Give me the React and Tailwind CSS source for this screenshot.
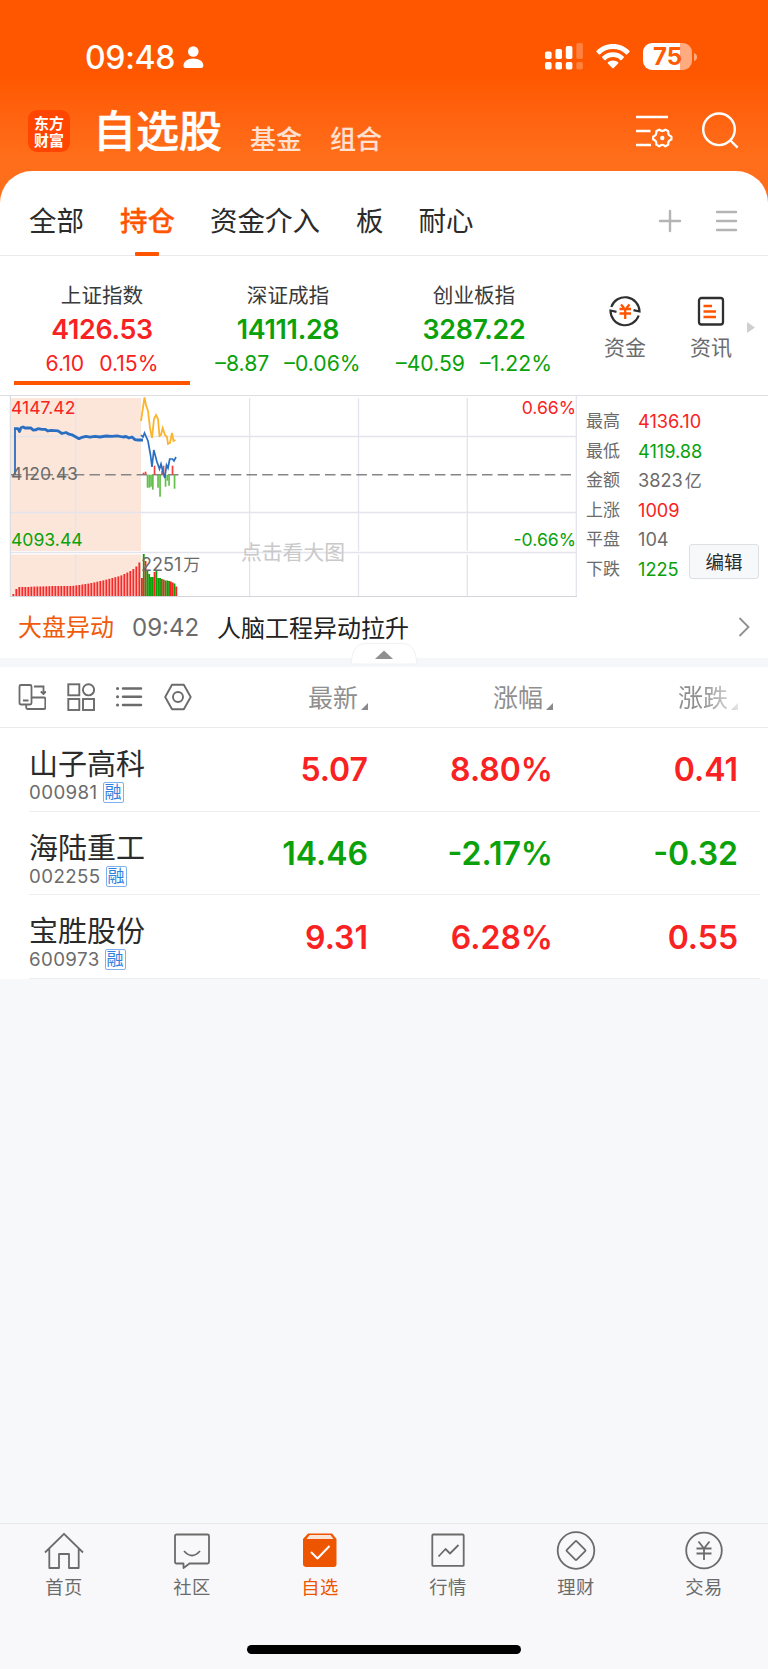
const indices = [
  { name: "上证指数", value: "4126.53", diff: "6.10", pct: "0.15%", up: true, active: true },
  { name: "深证成指", value: "14111.28", diff: "–8.87", pct: "–0.06%", up: false },
  { name: "创业板指", value: "3287.22", diff: "–40.59", pct: "–1.22%", up: false },
];

const stats = [
  { label: "最高", value: "4136.10", color: "text-[#f82222]" },
  { label: "最低", value: "4119.88", color: "text-[#0aa10a]" },
  { label: "金额", value: "3823", unit: "亿", color: "text-[#6b6b6b]" },
  { label: "上涨", value: "1009", color: "text-[#f82222]" },
  { label: "平盘", value: "104", color: "text-[#6b6b6b]" },
  { label: "下跌", value: "1225", color: "text-[#0aa10a]" },
];

const stocks = [
  { name: "山子高科", code: "000981", price: "5.07", pct: "8.80%", diff: "0.41", up: true },
  { name: "海陆重工", code: "002255", price: "14.46", pct: "-2.17%", diff: "-0.32", up: false },
  { name: "宝胜股份", code: "600973", price: "9.31", pct: "6.28%", diff: "0.55", up: true },
];

// height of the pre-open volume bars, left to right
const preVolume = [
  2, 7, 9, 9, 9, 9, 9.3, 9.4, 9.5, 9.5, 9.6, 9.7, 9.8, 10, 10, 10, 10, 10, 10, 10, 10.2, 10.6,
  11, 11.5, 12, 12.4, 13, 13.6, 14.3, 15, 15.6, 16.4, 17.2, 18, 18.8, 19.6, 20.6, 22, 23.5, 25, 27, 29.5, 33.5,
];

const liveVolume = [
  [18, "r"], [42, "g"], [35, "r"], [26, "g"], [22, "g"], [19, "g"], [19, "g"], [24, "r"], [26, "g"],
  [18, "g"], [18, "g"], [17, "r"], [16.5, "g"], [15.5, "r"], [15.5, "g"], [15, "g"], [14.5, "r"],
  [13.5, "r"], [12.5, "g"], [9.5, "r"],
];

// bars around the dashed middle line: [x, height], positive goes up
const flow = [
  [143.5, 2], [145.5, 3], [147.5, -13], [149.2, -13], [151, -12], [152.8, -15], [154.5, 9],
  [158, -13], [160, -22], [162, 4], [163.5, 9], [165.5, -12], [167.3, -6], [169, -11], [172.5, 9], [174.5, -14],
];

function StatusBar() {
  return (
    <div className="flex h-[94px] items-end justify-between pl-[85px] pr-[71px] pb-[24px] text-white">
      <div className="flex h-[26px] items-center">
        <span className="pt-px text-[32px] font-medium tracking-[-0.3px]">09:48</span>
        <svg className="ml-2 h-[22px] w-[21px]" viewBox="0 0 21 22" fill="currentColor">
          <circle cx="10.3" cy="5.5" r="5.3" />
          <path d="M0.5 19.5C0.5 15.5 4.5 12.6 10.3 12.6S20.3 15.5 20.3 19.5C20.3 21.2 19.5 22 18 22H2.8C1.3 22 0.5 21.2 0.5 19.5Z" />
        </svg>
      </div>
      <div className="flex h-[27px] items-center">
        <svg className="h-[27px] w-[39px]" viewBox="0 0 39 27" fill="currentColor">
          <rect x="0" y="8.5" width="6.6" height="7.5" rx="1.8" />
          <rect x="10.4" y="6" width="6.6" height="10" rx="1.8" />
          <rect x="20.8" y="3" width="6.6" height="13" rx="1.8" />
          <rect x="31.3" y="0" width="6.6" height="16" rx="1.8" opacity=".25" />
          <rect x="0" y="19" width="6.6" height="7.5" rx="1.8" />
          <rect x="10.4" y="19" width="6.6" height="7.5" rx="1.8" />
          <rect x="20.8" y="19" width="6.6" height="7.5" rx="1.8" />
          <rect x="31.3" y="19" width="6.6" height="7.5" rx="1.8" opacity=".25" />
        </svg>
        <svg className="ml-3 h-[25px] w-[34px]" viewBox="0 0 34 25" fill="currentColor">
          <path d="M17 0C10.5 0 4.8 2.5 0.6 6.7Q0 7.4 0.6 8.1L2.7 10.2Q3.4 10.8 4.1 10.2C7.5 6.9 12 5 17 5S26.5 6.9 29.9 10.2Q30.6 10.8 31.3 10.2L33.4 8.1Q34 7.4 33.4 6.7C29.2 2.5 23.5 0 17 0Z" />
          <path d="M17 8.2C12.8 8.2 9.1 9.8 6.3 12.4Q5.7 13.1 6.3 13.8L8.4 15.9Q9.1 16.5 9.8 15.9C11.7 14.1 14.2 13.1 17 13.1S22.3 14.1 24.2 15.9Q24.9 16.5 25.6 15.9L27.7 13.8Q28.3 13.1 27.7 12.4C24.9 9.8 21.2 8.2 17 8.2Z" />
          <path d="M17 16.5C15 16.5 13.2 17.2 11.9 18.3Q11.3 19 11.9 19.6L16.3 24Q17 24.7 17.7 24L22.1 19.6Q22.7 19 22.1 18.3C20.8 17.2 19 16.5 17 16.5Z" />
        </svg>
        <div className="ml-[13px] flex h-[27px] w-[49px] items-center justify-center rounded-[9px] bg-gradient-to-r from-white from-76% to-white/50 to-76%">
          <span className="text-[24px] leading-none font-bold text-[#ff5a04]">75</span>
        </div>
        <svg className="ml-[2px] h-2 w-[3px]" viewBox="0 0 3 8" fill="white" opacity=".5">
          <path d="M0 0Q3 1 3 4T0 8Z" />
        </svg>
      </div>
    </div>
  );
}

function Header() {
  return (
    <div className="flex h-[77px] items-start px-7 text-white">
      <div className="mt-4 flex size-[42px] shrink-0 flex-col items-center justify-center rounded-[9px] bg-[#ff4500] font-['Noto_Sans_CJK_SC',sans-serif] text-[15px] leading-[17px] font-bold">
        <span>东方</span>
        <span>财富</span>
      </div>
      <h1 className="ml-[23px] text-[43px] leading-[75px] font-medium whitespace-nowrap [-webkit-text-stroke:0.5px_white]">
        自选股
      </h1>
      <span className="ml-[28px] text-[26px] leading-[92px] font-medium whitespace-nowrap text-white/80">基金</span>
      <span className="ml-[28px] text-[26px] leading-[92px] font-medium whitespace-nowrap text-white/80">组合</span>
      <svg className="mt-[20px] ml-auto h-[36px] w-[38px]" viewBox="0 0 38 36" fill="none" stroke="currentColor" strokeWidth="2.4">
        <path d="M1 3H33M1 17H15.5M1 31H16" />
        <path
          strokeWidth="2.2"
          strokeLinejoin="round"
          d="M24.2 15.6Q27.3 18.2 30.4 15.6L33.3 17.2Q32.6 21.3 36.4 22.5V25.5Q32.6 26.7 33.3 30.6L30.4 32.3Q27.3 29.6 24.2 32.3L21.3 30.6Q22 26.7 18.2 25.5V22.5Q22 21.3 21.3 17.2Z"
        />
        <circle cx="27.3" cy="24" r="2.2" fill="currentColor" stroke="none" />
      </svg>
      <svg className="mt-[18px] mr-[1px] ml-[28px] h-[38px] w-[38px]" viewBox="0 0 38 38" fill="none" stroke="currentColor" strokeWidth="2.4">
        <circle cx="18" cy="17.3" r="15.8" />
        <path d="M29 28L36.6 35.6" />
      </svg>
    </div>
  );
}

function GroupTabs() {
  return (
    <div className="flex h-[85px] border-b border-[#e9eaec] pr-[30px] pl-[29px] text-[27.5px] leading-[101px] text-[#2b2b2b]">
      <span>全部</span>
      <div className="relative ml-[36px] font-medium text-[#ff5500] [-webkit-text-stroke:0.3px_#ff5500]">
        持仓
        <div className="absolute bottom-[-1px] left-[15px] h-1 w-6 rounded-[1px] bg-[#ff5500]" />
      </div>
      <span className="ml-[35px]">资金介入</span>
      <span className="ml-[36px]">板</span>
      <span className="ml-[35px]">耐心</span>
      <svg className="mt-[38px] ml-auto size-6" viewBox="0 0 24 24" stroke="#b4b4b4" strokeWidth="2.4" strokeLinecap="round">
        <path d="M12 2V22M2 12H22" />
      </svg>
      <svg className="mt-[38px] ml-[32px] size-6" viewBox="0 0 24 24" stroke="#b4b4b4" strokeWidth="2.4" strokeLinecap="round">
        <path d="M3 3H22M3 12H22M3 21H22" />
      </svg>
    </div>
  );
}

function IndexCards() {
  return (
    <div className="flex h-[139px] pl-[9px]">
      {indices.map((it) => (
        <div
          key={it.name}
          className={`flex w-[186px] flex-col items-center whitespace-nowrap ${it.up ? "text-[#f82222]" : "text-[#0aa10a]"}`}
        >
          <div className="mt-[25px] h-[30px] text-[20.6px] leading-[30px] text-[#3a3a3a]">{it.name}</div>
          <div className="mt-[3px] h-[30px] text-[26.8px] leading-[30px] font-semibold tracking-[-0.3px]">{it.value}</div>
          <div className="mt-[6px] flex h-[26px] gap-[15px] text-[21.2px] leading-[26px]">
            <span>{it.diff}</span>
            <span>{it.pct}</span>
          </div>
          {it.active && <div className="mt-[5px] h-1 w-[176px] bg-[#ff5500]" />}
        </div>
      ))}
      <div className="ml-[15px] flex w-[86px] flex-col items-center text-[21px] leading-[30px] text-[#6b6b6b]">
        <svg className="mt-[39px] size-8" viewBox="0 0 32 32" fill="none" stroke="#2f2f2f" strokeWidth="2.2">
          <path d="M2.3 12A14.5 14.5 0 0 1 30.5 16.5L24.5 15.2" />
          <path d="M29.7 20.5A14.5 14.5 0 0 1 1.5 15.5L7.5 16.8" />
          <path stroke="#ff5500" strokeWidth="2.3" d="M12 9.5L15 13M20.5 9.5L17.5 13M10.5 14H22M10.5 18.5H22M16.2 13V24" />
        </svg>
        <span className="mt-[6px]">资金</span>
      </div>
      <div className="flex w-[86px] flex-col items-center text-[21px] leading-[30px] text-[#6b6b6b]">
        <svg className="mt-[39px] size-8" viewBox="0 0 32 32" fill="none" stroke="#2f2f2f" strokeWidth="2.3">
          <rect x="4" y="3" width="24" height="26.5" rx="2.5" />
          <path stroke="#ff5500" d="M8.5 11H17M8.5 16.5H21M8.5 22H21" />
        </svg>
        <span className="mt-[6px]">资讯</span>
      </div>
      <svg className="mt-[66px] ml-[-7px] h-[11px] w-2 shrink-0" viewBox="0 0 8 11" fill="#cfcfcf">
        <path d="M0 0L8 5.5L0 11Z" />
      </svg>
    </div>
  );
}

function Chart() {
  return (
    <div className="relative ml-[9px] h-[202px] w-[569px] text-[17.6px] leading-none">
      <svg className="block h-[202px] w-[569px]" viewBox="9 10 569 202" fill="none">
        <rect x="11" y="13" width="130" height="153" fill="#fce6da" />
        <rect x="11" y="169.5" width="130" height="41" fill="#fce6da" />
        <g stroke="#e3e4ec" strokeWidth="1.3">
          <path d="M75.7 13V166M75.7 169.5V211M249.6 13V166M249.6 169.5V211M358.5 13V166M358.5 169.5V211M467.3 13V166M467.3 169.5V211" />
          <path d="M10 51.5H576M10 127.5H576M10 167.5H576" />
          <path d="M576.3 10V211" />
        </g>
        <path d="M10.3 10V211.5" stroke="#d3d5da" />
        <path d="M10 211.5H577" stroke="#d3d5da" />
        <path d="M11 89.7H572" stroke="#858585" strokeWidth="1.4" strokeDasharray="10.5 5.2" />

        {preVolume.map((h, i) => (
          <rect key={i} x={12.4 + i * 3} y={211 - h} width="1.9" height={h} fill="#f62a2a" />
        ))}
        {liveVolume.map(([h, c], i) => (
          <rect key={i} x={141 + i * 1.81} y={211 - h} width="1.85" height={h} fill={c === "r" ? "#f82222" : "#0aa10a"} />
        ))}
        {flow.map(([x, h]) => (
          <rect
            key={x}
            x={x - 0.8}
            y={h > 0 ? 89.7 - h : 89.7}
            width="1.7"
            height={Math.abs(h)}
            fill={h > 0 ? "#f04040" : "#62bf4a"}
          />
        ))}

        <polyline stroke="#2a6ec2" strokeWidth="1.8" points="15,90 15,43.5" />
        <polyline
          stroke="#2a6ec2"
          strokeWidth="2.8"
          strokeLinejoin="round"
          points="14,43.7 18,43.7 19.5,46.5 21,42.7 23,42 25,43 31,43 33,45 36,44.8 38,43.6 42,44.3 45,44.3 48,46 50,45.5 55,45.6 58,45.8 62,48.5 66,47.5 69,49.2 72,49.8 75,51.5 79,53.7 82,52.3 86,51.3 90,52.2 95,51.3 100,52 106,51 112,51.3 117,50.8 123,52 126,51.5 129,53 132,52 135,54.6 138,55 143,55"
        />
        <polyline
          stroke="#2a6ec2"
          strokeWidth="1.7"
          points="141,50 143,52 144.5,48 148,56 150.5,70 152,82 153.8,65 157,77 159.5,84 161,79 163,87 164.8,93 166.5,80 168,83 169.7,74 172.5,74 174,76 176,72"
        />
        <polyline
          stroke="#fbb42c"
          strokeWidth="1.8"
          points="141,36 144.5,12.5 146,20 148,26 150,43 152,53 154,34 156,30 158,34 159.5,51 161,50 162.7,43 165,50 167,52 168,59 170,58 172,48 173.5,56 175.5,55"
        />
      </svg>
      <div className="absolute top-[4px] left-[2px] text-[#f82222]">4147.42</div>
      <div className="absolute top-[70px] left-[2px] text-[#6b6b6b]">4120.43</div>
      <div className="absolute top-[136px] left-[2px] text-[#0aa10a]">4093.44</div>
      <div className="absolute top-[4px] right-[2px] text-[#f82222]">0.66%</div>
      <div className="absolute top-[136px] right-[2px] text-[#0aa10a]">-0.66%</div>
      <div className="absolute top-[161px] left-[132px] text-[18px] text-[#6b6b6b]">
        2251<span className="ml-[2px] text-[17px]">万</span>
      </div>
      <div className="absolute top-[148px] left-[232px] text-[20.8px] text-[#c9c9c9]">点击看大图</div>
    </div>
  );
}

function ChartPanel() {
  return (
    <div className="flex h-[202px] border-t-[1.5px] border-[#dcdee2]">
      <div className="mt-[-1px]">
        <Chart />
      </div>
      <div className="relative flex-1 pt-[11px] pl-2 text-[17px] leading-[29.6px] whitespace-nowrap">
        {stats.map((s) => (
          <div key={s.label} className="flex h-[29.6px]">
            <span className="w-[52px] text-[#6b6b6b]">{s.label}</span>
            <span className={`text-[18.2px] ${s.color}`}>
              {s.value}
              {s.unit && <span className="ml-[2px] text-[17px]">{s.unit}</span>}
            </span>
          </div>
        ))}
        <button className="absolute top-[148px] right-[9px] h-[35px] w-[70px] rounded-[3px] border border-[#dddfe4] bg-[#f7f8fa] text-[18.5px] leading-[34px] text-[#2b2b2b]">
          编辑
        </button>
      </div>
    </div>
  );
}

function NewsRow() {
  return (
    <div className="relative flex h-[70px] items-start border-b-[9px] border-[#f6f7fa] pr-[18px] pl-[18px] text-[24px] leading-[62px] whitespace-nowrap">
      <span className="text-[#f05a0a]">大盘异动</span>
      <span className="ml-[18px] text-[#6b6b6b]">09:42</span>
      <span className="ml-[18px] pt-px text-[#222]">人脑工程异动拉升</span>
      <svg className="mt-[20px] ml-auto h-5 w-3" viewBox="0 0 12 20" fill="none" stroke="#8f8f8f" strokeWidth="1.8">
        <path d="M1.5 1L10.5 10L1.5 19" />
      </svg>
      {/* collapse handle */}
      <svg className="absolute top-[45px] left-[350px] h-[24px] w-[68px]" viewBox="0 0 68 24">
        <path d="M1 22C2 14 3 1.5 16 1.5H52C65 1.5 66 14 67 22Z" fill="#fff" stroke="#f0f1f4" />
        <path d="M25 17L34 8.5L43 17Z" fill="#8f8f8f" />
      </svg>
    </div>
  );
}

function ColumnTitle({ children }) {
  return (
    <>
      <span className="pt-[4px]">{children}</span>
      <svg className="mb-[-19px] ml-[3px] h-[7px] w-[7px]" viewBox="0 0 7 7" fill="#8a8a8a">
        <path d="M7 0V7H0Z" />
      </svg>
    </>
  );
}

function ListToolbar() {
  return (
    <div className="flex h-[61px] items-center border-b border-[#e9eaec] text-[25px] whitespace-nowrap text-[#8f8f8f]">
      <div className="flex w-[190px] shrink-0 items-center gap-[20.5px] pl-[18px] [&>svg]:shrink-0">
        <svg className="size-7" viewBox="0 0 28 28" fill="none" stroke="#6b6b6b" strokeWidth="1.8">
          <rect x="1.5" y="2" width="12" height="19.5" rx="1.5" />
          <path d="M5 17.5H10.5M16 3.5H25.5V10M22.8 8.5L25.5 11L28 8.5M14 14.5H26Q27.3 14.5 27.3 16V24.5Q27.3 26 26 26H9.5Q8.2 26 8.2 24.5V22" />
        </svg>
        <svg className="size-7" viewBox="0 0 28 28" fill="none" stroke="#6b6b6b" strokeWidth="1.9">
          <rect x="1.3" y="1.3" width="11" height="11" />
          <rect x="1.3" y="16" width="11" height="11" />
          <rect x="16" y="16" width="11" height="11" />
          <circle cx="21.5" cy="6.8" r="5.6" />
        </svg>
        <svg className="size-7" viewBox="0 0 28 28" fill="none" stroke="#6b6b6b" strokeWidth="2.5" strokeLinecap="round">
          <path d="M8 5.5H26M8 13.8H26M8 22H26" />
          <path strokeWidth="3" d="M2.5 5.5H2.6M2.5 13.8H2.6M2.5 22H2.6" />
        </svg>
        <svg className="size-7" viewBox="0 0 28 28" fill="none" stroke="#6b6b6b" strokeWidth="1.9" strokeLinejoin="round">
          <path d="M8 1.8H19.8L26.7 14L19.8 26.2H8L1.2 14Z" />
          <circle cx="14" cy="14" r="5" />
        </svg>
      </div>
      <div className="flex w-[178px] items-center justify-end">
        <ColumnTitle>最新</ColumnTitle>
      </div>
      <div className="flex w-[185px] items-center justify-end">
        <ColumnTitle>涨幅</ColumnTitle>
      </div>
      <div className="flex w-[185px] items-center justify-end [mask-image:linear-gradient(to_right,black_80%,transparent_106%)]">
        <ColumnTitle>涨跌</ColumnTitle>
      </div>
    </div>
  );
}

function StockRow({ stock }) {
  return (
    <div className="mr-2 ml-[29px] flex h-[83.7px] border-b-[1.5px] border-[#ecedef]">
      <div className="w-[159px] pt-[15px]">
        <div className="h-[39px] text-[29px] leading-[43px] whitespace-nowrap text-[#2b2b2b]">{stock.name}</div>
        <div className="flex h-[21px] items-center text-[18.7px] leading-[21px] text-[#6b6b6b]">
          <span className="tracking-[0.4px]">{stock.code}</span>
          <span className="ml-[5px] flex h-[21px] w-[21px] items-center justify-center rounded-[2px] border border-[#7fb2ec] text-[17px] leading-none text-[#2f80dd]">
            融
          </span>
        </div>
      </div>
      <div
        className={`flex items-center pt-[2px] text-right text-[32px] leading-none font-semibold ${stock.up ? "text-[#f82222]" : "text-[#0aa10a]"}`}
      >
        <span className="w-[180px]">{stock.price}</span>
        <span className="w-[185px]">{stock.pct}</span>
        <span className="w-[185px]">{stock.diff}</span>
      </div>
    </div>
  );
}

const navItems = [
  {
    label: "首页",
    icon: <path d="M1 20.5L20 1.8L39 20.5M5.3 17V36H15V22H25V36H34.7V17" />,
  },
  {
    label: "社区",
    icon: (
      <>
        <path d="M4.5 2.5H35.5Q37 2.5 37 4V30Q37 31.5 35.5 31.5H17.5L11.5 36V31.5H4.5Q3 31.5 3 30V4Q3 2.5 4.5 2.5Z" />
        <path d="M12 19Q20 28 28 19" />
      </>
    ),
  },
  {
    label: "自选",
    active: true,
    icon: (
      <>
        <path fill="#ee5500" stroke="none" d="M8 1.5H32L36.5 7V32Q36.5 35 33.5 35H6.5Q3 35 3 32V7Z" />
        <path fill="#fbe3d6" stroke="none" d="M9.5 3H30.5L33.5 7H6.5Z" />
        <path stroke="#fff" strokeWidth="2" d="M11 20L17.5 26.5L29.5 14" />
      </>
    ),
  },
  {
    label: "行情",
    icon: (
      <>
        <rect x="4.3" y="2.5" width="31.4" height="31.4" rx="1" />
        <path d="M10.5 24.5L17.5 17L22 21.5L30.5 13" />
      </>
    ),
  },
  {
    label: "理财",
    icon: (
      <>
        <circle cx="20" cy="18.5" r="18.3" />
        <rect x="13" y="11.5" width="14" height="14" rx="1" transform="rotate(45 20 18.5)" />
      </>
    ),
  },
  {
    label: "交易",
    icon: (
      <>
        <circle cx="20" cy="18.5" r="17.8" />
        <path d="M14.5 9.5L20 16.5L25.5 9.5M12.5 16.5H27.5M12.5 21.5H27.5M20 16.5V28" />
      </>
    ),
  },
];

function BottomNav() {
  return (
    <div className="mt-auto h-[146px] border-t-[1.5px] border-[#e6e8ee] bg-[#f8f8fb]">
      <div className="flex">
        {navItems.map((item) => (
          <div
            key={item.label}
            className={`flex w-[128px] flex-col items-center text-[18.3px] leading-[28px] ${item.active ? "text-[#ee5500]" : "text-[#6b6b6b]"}`}
          >
            <svg
              className="mt-2 h-[38px] w-10 overflow-visible"
              viewBox="0 0 40 38"
              fill="none"
              stroke="currentColor"
              strokeWidth="1.8"
              strokeLinejoin="round"
            >
              {item.icon}
            </svg>
            <span className="mt-[3px] tracking-[0.5px]">{item.label}</span>
          </div>
        ))}
      </div>
      <div className="mx-auto mt-[44px] h-[9px] w-[274px] rounded-full bg-black" />
    </div>
  );
}

export default function App() {
  return (
    <div className="flex h-[1669px] w-[768px] flex-col overflow-hidden bg-[#f7f8fa] font-['Inter','Noto_Sans_CJK_SC',sans-serif]">
      <div className="h-[210px] shrink-0 bg-gradient-to-b from-[#ff5700] from-36% to-[#ff6e1a] to-75%">
        <StatusBar />
        <Header />
      </div>
      <div className="mt-[-39px] rounded-t-[32px] bg-white">
        <GroupTabs />
        <IndexCards />
        <ChartPanel />
        <NewsRow />
        <ListToolbar />
        {stocks.map((s) => (
          <StockRow key={s.code} stock={s} />
        ))}
      </div>
      <BottomNav />
    </div>
  );
}
